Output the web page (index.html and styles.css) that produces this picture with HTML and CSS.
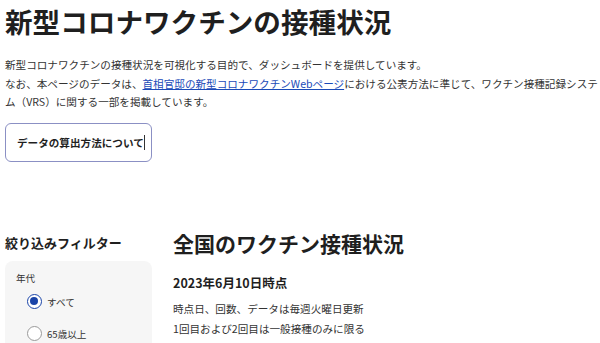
FILE: index.html
```html
<!DOCTYPE html>
<html lang="ja">
<head>
<meta charset="utf-8">
<link rel="stylesheet" href="styles.css">
</head>
<body>
<div class="page">
  <h1 class="title">新型コロナワクチンの接種状況</h1>
  <p class="intro">新型コロナワクチンの接種状況を可視化する目的で、ダッシュボードを提供しています。<br>なお、本ページのデータは、<a class="link" href="#">首相官邸の新型コロナワクチンWebページ</a>における公表方法に準じて、ワクチン接種記録システム（VRS）に関する一部を掲載しています。</p>
  <button class="about-btn" type="button">データの算出方法について<span class="caret"></span></button>

  <div class="main">
    <aside class="sidebar">
      <h2 class="side-title">絞り込みフィルター</h2>
      <div class="filter-panel">
        <div class="filter-label">年代</div>
        <label class="radio-row"><span class="radio checked"></span><span>すべて</span></label>
        <label class="radio-row"><span class="radio"></span><span>65歳以上</span></label>
      </div>
    </aside>
    <section class="content">
      <h2 class="content-title">全国のワクチン接種状況</h2>
      <h3 class="date">2023年6月10日時点</h3>
      <p class="note">時点日、回数、データは毎週火曜日更新<br>1回目および2回目は一般接種のみに限る</p>
    </section>
  </div>
</div>
</body>
</html>
```

FILE: styles.css
```css
html, body {
  margin: 0;
  padding: 0;
  background: #ffffff;
}
.page {
  padding: 0 5px;
  font-family: "Noto Sans CJK JP", "Noto Sans", sans-serif;
  color: #333333;
}
.title {
  margin: 0;
  font-size: 27.6px;
  line-height: 43px;
  font-weight: 700;
  color: #1f1f1f;
}
.intro {
  margin: 13px -5px 0 0;
  font-size: 10.6px;
  line-height: 18.5px;
  color: #333333;
}
.link {
  color: #1a4ab8;
  text-decoration: underline;
}
.about-btn {
  display: flex;
  align-items: center;
  margin-top: 11px;
  width: 147px;
  height: 39px;
  padding: 0 0 0 11px;
  background: #ffffff;
  border: 1px solid #8b90c4;
  border-radius: 6px;
  font-family: "Noto Sans CJK JP", sans-serif;
  font-size: 10.6px;
  font-weight: 700;
  color: #1f1f1f;
}
.caret {
  display: inline-block;
  width: 0;
  height: 15px;
  border-left: 1px solid #333;
  margin-left: 0;
}
.main {
  display: grid;
  grid-template-columns: 147px 1fr;
  column-gap: 21px;
  margin-top: 68px;
}
.side-title {
  margin: 0;
  font-size: 13px;
  line-height: 26px;
  font-weight: 700;
  color: #1f1f1f;
}
.filter-panel {
  margin-top: 5px;
  background: #f6f6f6;
  border-radius: 8px;
  padding: 9px 11px 20px;
  height: 120px;
}
.filter-label {
  font-size: 9.6px;
  line-height: 16px;
  color: #333;
}
.radio-row {
  display: flex;
  align-items: center;
  gap: 5px;
  height: 32px;
  margin-left: 11px;
  font-size: 9.6px;
  color: #333;
}
.radio {
  box-sizing: border-box;
  width: 15px;
  height: 15px;
  border-radius: 50%;
  border: 1px solid #9a9a9a;
  background: #ffffff;
  position: relative;
}
.radio.checked {
  border: 1.5px solid #1a44a8;
}
.radio.checked::after {
  content: "";
  position: absolute;
  left: 2px;
  top: 2px;
  width: 8px;
  height: 8px;
  border-radius: 50%;
  background: #1a44a8;
}
.content-title {
  margin: 0;
  font-size: 21px;
  line-height: 26px;
  font-weight: 700;
  color: #1f1f1f;
}
.date {
  margin: 17px 0 0;
  font-size: 12.5px;
  line-height: 20px;
  font-weight: 700;
  color: #1f1f1f;
}
.note {
  margin: 6px 0 0;
  font-size: 10.6px;
  line-height: 20px;
  color: #333;
}
```
